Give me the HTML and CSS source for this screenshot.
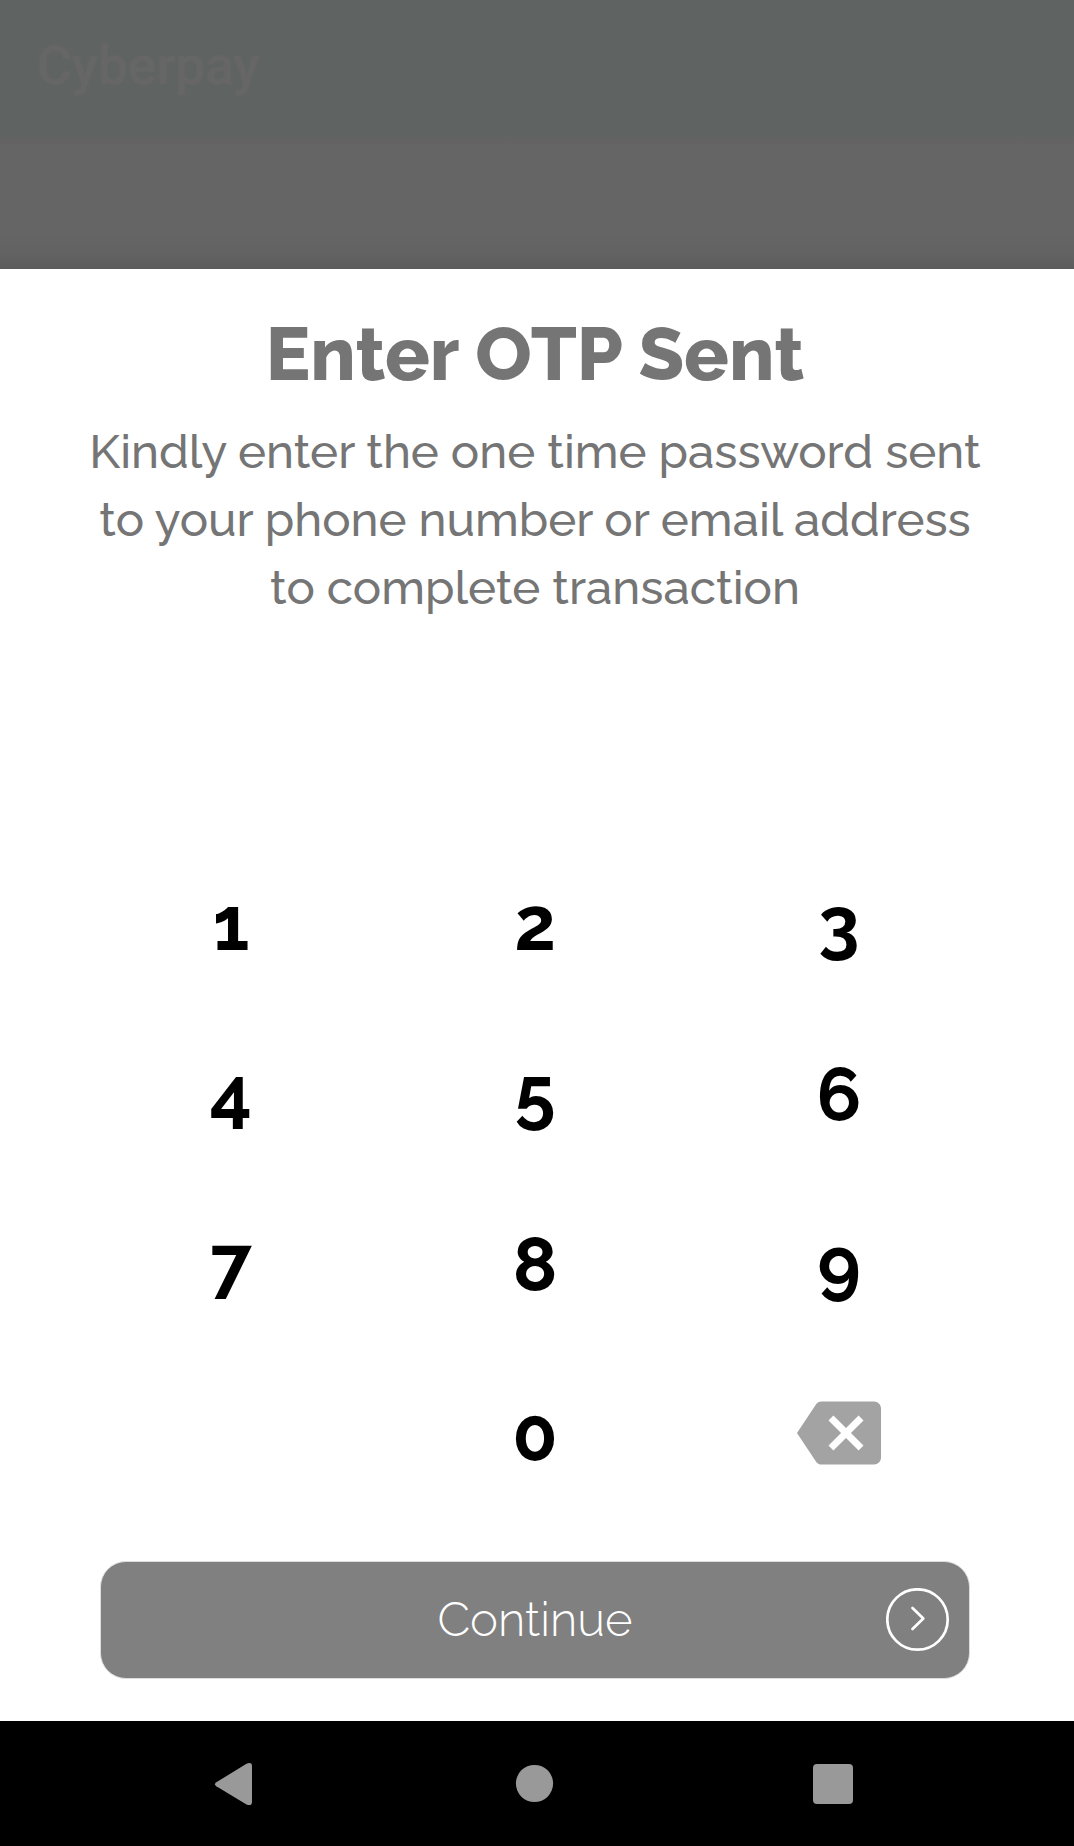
FILE: index.html
```html
<!DOCTYPE html>
<html lang="en">
<head>
<meta charset="utf-8">
<title>Cyberpay</title>
<link rel="stylesheet" href="styles.css">
</head>
<body>
<div class="screen">
  <header class="app-bar">Cyberpay</header>
  <div class="backdrop"></div>
  <main class="sheet">
    <h1 class="title">Enter OTP Sent</h1>
    <p class="hint">Kindly enter the one time password sent<br>to your phone number or email address<br>to complete transaction</p>
    <div class="keypad">
      <button class="key">1</button>
      <button class="key">2</button>
      <button class="key">3</button>
      <button class="key">4</button>
      <button class="key">5</button>
      <button class="key">6</button>
      <button class="key">7</button>
      <button class="key">8</button>
      <button class="key">9</button>
      <span></span>
      <button class="key">0</button>
      <button class="key key-delete" aria-label="Delete">
        <svg width="84" height="84" viewBox="0 0 24 24"><path fill="#a3a3a3" d="M22 3H7c-.69 0-1.23.35-1.59.88L0 12l5.41 8.11c.36.53.9.89 1.59.89h15c1.1 0 2-.9 2-2V5c0-1.100-.9-2-2-2zm-3 12.590L17.590 17 14 13.410 10.410 17 9 15.590 12.590 12 9 8.410 10.410 7 14 10.590 17.590 7 19 8.410 15.410 12 19 15.590z"/></svg>
      </button>
    </div>
    <button class="continue">
      <span class="continue-label">Continue</span>
      <svg class="continue-icon" width="64" height="64" viewBox="0 0 64 64" fill="none" stroke="#fff" stroke-width="2.700" stroke-linecap="round" stroke-linejoin="round"><circle cx="31.500" cy="31.500" r="30.200"/><path d="M26.500 20 37.300 30.500 26.500 41"/></svg>
    </button>
  </main>
  <nav class="nav-bar">
    <svg class="nav-icons" width="1074" height="125" viewBox="0 0 1074 125" fill="#999"><path d="M216.300 61.300 246.500 42.700Q252 40.500 252 45V81Q252 85.500 246.500 83.500L216.300 65.200Q213.700 63.200 216.300 61.300Z"/><circle cx="534.500" cy="62.500" r="18.600"/><rect x="813" y="43" width="40" height="40" rx="4"/></svg>
  </nav>
</div>
</body>
</html>
```
FILE: styles.css
```css
* {
  box-sizing: border-box;
}

body {
  margin: 0;
  font-family: Raleway, Lato, sans-serif;
}

button {
  padding: 0;
  border: 0;
  background: none;
  font-family: inherit;
}

svg {
  display: block;
}

.screen {
  display: flex;
  flex-direction: column;
  width: 1074px;
  height: 1846px;
  background: #656565;
}

.app-bar {
  height: 137px;
  padding-left: 37px;
  background: #5f6462;
  color: #676666;
  font: 500 53.3px/133px Roboto, sans-serif;
  -webkit-text-stroke: 0.4px #676666;
}

.backdrop {
  height: 132px;
  background: linear-gradient(#626262, #656565 10px, #656565 98px, #626262 118px, #5b5b5b);
}

.sheet {
  display: flex;
  flex-direction: column;
  align-items: center;
  height: 1452px;
  padding: 35px 4px 0 0;
  background: #fff;
}

.title {
  margin: 0;
  color: #757575;
  font-size: 74.3px;
  font-weight: 800;
  line-height: 100px;
}

.hint {
  margin: 13px 0 218px;
  color: #757575;
  font-size: 47.4px;
  font-weight: 500;
  line-height: 68px;
  text-align: center;
  white-space: nowrap;
}

.keypad {
  display: grid;
  grid-template-columns: repeat(3, 304px);
  grid-auto-rows: 170px;
}

.key {
  color: #000;
  font-size: 74px;
  font-weight: 700;
  line-height: 170px;
}

.key-delete {
  display: flex;
  align-items: center;
  justify-content: center;
  padding-bottom: 2px;
}

.continue {
  display: grid;
  grid-template-columns: 64px 1fr 64px;
  align-items: center;
  width: 870px;
  height: 118px;
  margin-top: 42px;
  padding: 0 19px;
  border: 1px solid #ddd;
  border-radius: 26px;
  background: #808080;
  color: #fff;
}

.continue-label {
  grid-column: 2;
  font-size: 47.3px;
  font-weight: 300;
  line-height: 68px;
}

.nav-bar {
  height: 125px;
  background: #000;
}
```
